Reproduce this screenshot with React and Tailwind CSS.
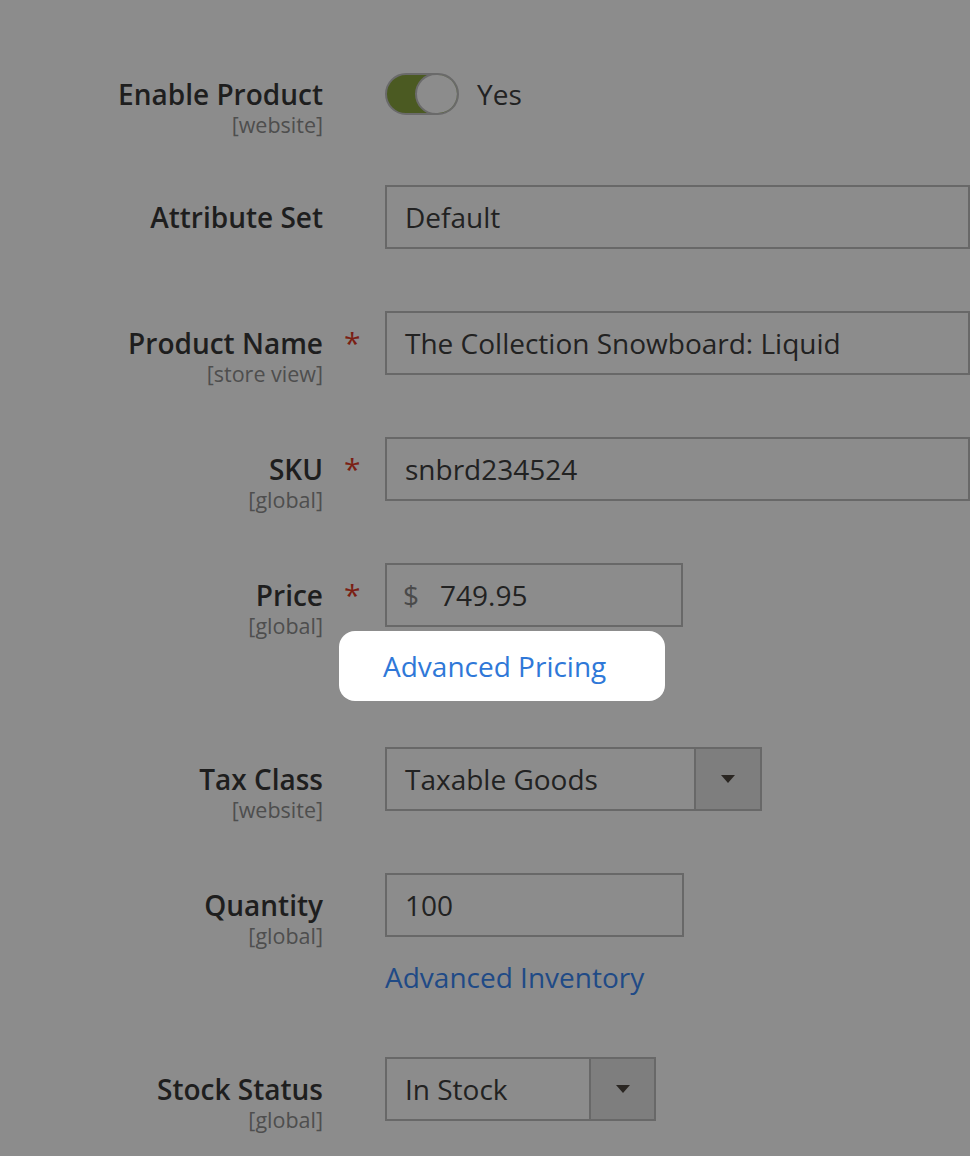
const font = { fontFamily: '"Open Sans", "Noto Sans", sans-serif' };

const Label = ({ title, scope, pad = 'pt-[16px]' }) => (
  <div className={`w-[323px] shrink-0 text-right ${pad}`}>
    <div className="text-[28px] leading-[32px] font-semibold text-[#1e1e1e]">{title}</div>
    {scope && <div className="text-[21.5px] leading-[30px] text-[#4e4e4e]">{scope}</div>}
  </div>
);

const Star = ({ show }) => (
  <div className="w-[62px] shrink-0 pl-[21px] pt-[17px] text-[30px] leading-[30px] text-[#7b1f14]">
    {show ? '*' : ''}
  </div>
);

const TextInput = ({ value, width = 'w-[640px]' }) => (
  <div className={`${width} h-[64px] border-2 border-[#686868] flex items-center pl-[18px] text-[28px] text-[#222]`}>
    {value}
  </div>
);

const Select = ({ value, width, arrow }) => (
  <div className={`${width} h-[64px] border-2 border-[#686868] flex`}>
    <div className="flex-1 flex items-center pl-[18px] text-[28px] text-[#222]">{value}</div>
    <div className={`${arrow} border-l-2 border-[#686868] bg-[#7e7e7e] flex items-center justify-center`}>
      <svg width="16" height="10" viewBox="0 0 16 10">
        <path d="M1 1 L15 1 L8 9 Z" fill="#2a2622" />
      </svg>
    </div>
  </div>
);

export default function App() {
  return (
    <div className="w-[970px] h-[1156px] overflow-hidden bg-[#8c8c8c]" style={font}>
      {/* Enable Product */}
      <div className="flex items-start mt-[73px]">
        <Label title="Enable Product" scope="[website]" pad="pt-[5px]" />
        <Star />
        <div className="flex items-center gap-[18px]">
          <div className="relative w-[74px] h-[42px] rounded-full border-2 border-[#6a6a6a] bg-[#4b5a22] overflow-hidden">
            <div className="absolute right-[-2px] top-[-2px] w-[44px] h-[42px] rounded-full border-2 border-[#6a6a6a] bg-[#8c8c8c]"></div>
          </div>
          <span className="text-[28px] text-[#222]">Yes</span>
        </div>
      </div>

      {/* Attribute Set */}
      <div className="flex items-start mt-[45px]">
        <Label title="Attribute Set" />
        <Star />
        <TextInput value="Default" />
      </div>

      {/* Product Name */}
      <div className="flex items-start mt-[62px]">
        <Label title="Product Name" scope="[store view]" />
        <Star show />
        <TextInput value="The Collection Snowboard: Liquid" />
      </div>

      {/* SKU */}
      <div className="flex items-start mt-[48px]">
        <Label title="SKU" scope="[global]" />
        <Star show />
        <TextInput value="snbrd234524" />
      </div>

      {/* Price */}
      <div className="flex items-start mt-[48px]">
        <Label title="Price" scope="[global]" />
        <Star show />
        <div className="flex flex-col">
          <div className="w-[298px] h-[64px] border-2 border-[#686868] flex items-center pl-[16px] text-[28px]">
            <span className="text-[#4a4a4a]">$</span>
            <span className="ml-[21px] text-[#222]">749.95</span>
          </div>
          <div className="mt-[4px] -ml-[46px] w-[326px] h-[70px] rounded-[16px] bg-white flex items-center pl-[44px] text-[28px] text-[#2f78d8]">
            Advanced Pricing
          </div>
        </div>
      </div>

      {/* Tax Class */}
      <div className="flex items-start mt-[46px]">
        <Label title="Tax Class" scope="[website]" />
        <Star />
        <Select value="Taxable Goods" width="w-[377px]" arrow="w-[66px]" />
      </div>

      {/* Quantity */}
      <div className="flex items-start mt-[48px]">
        <Label title="Quantity" scope="[global]" />
        <Star />
        <div className="flex flex-col">
          <TextInput value="100" width="w-[299px]" />
          <div className="mt-[22px] text-[28px] leading-[36px] text-[#1f4a86]">Advanced Inventory</div>
        </div>
      </div>

      {/* Stock Status */}
      <div className="flex items-start mt-[62px]">
        <Label title="Stock Status" scope="[global]" />
        <Star />
        <Select value="In Stock" width="w-[271px]" arrow="w-[65px]" />
      </div>
    </div>
  );
}
